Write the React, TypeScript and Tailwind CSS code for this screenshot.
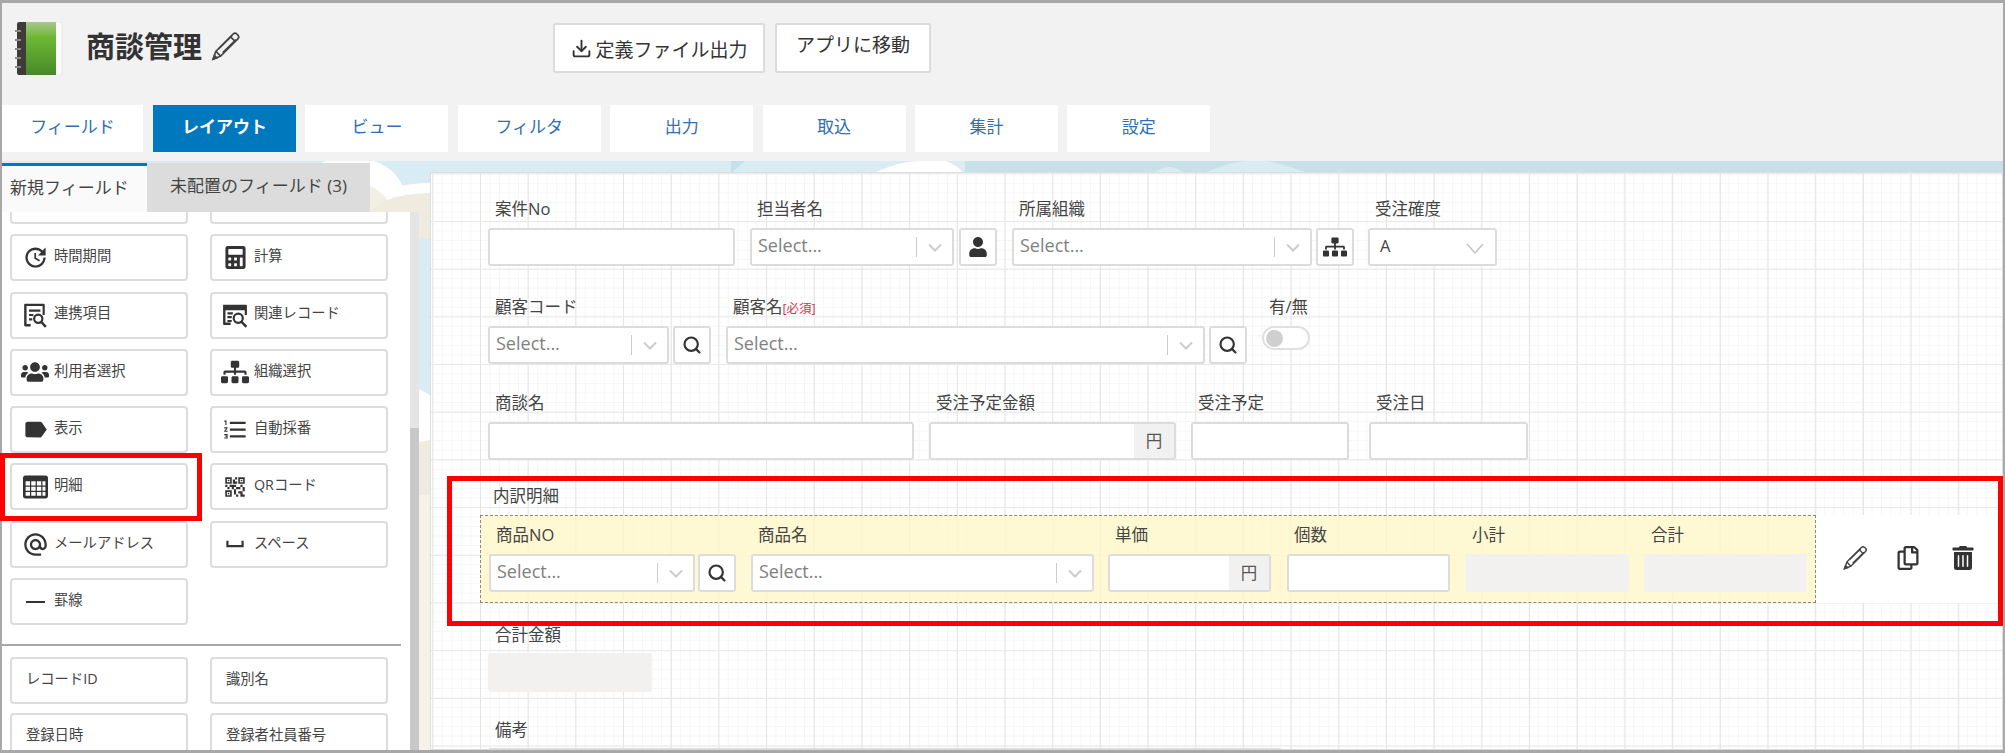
import type { ReactNode } from "react";
import { Download, Search } from "lucide-react";
import { FaCalculator, FaRegCopy, FaSitemap, FaTrashAlt, FaUser, FaUsers } from "react-icons/fa";
import {
  MdAlternateEmail,
  MdFormatListNumbered,
  MdLabel,
  MdQrCode2,
  MdSpaceBar,
  MdUpdate,
} from "react-icons/md";

const tabs = ["レイアウト", "ビュー", "フィルタ", "出力", "取込", "集計", "設定"];

const PencilIcon = ({ className }: { className: string }) => (
  <svg viewBox="0 0 24 24" fill="none" stroke="currentColor" strokeWidth="1.2" className={className}>
    <path d="M5 15.5 17.5 3a2 2 0 0 1 2.8 0l.7.7a2 2 0 0 1 0 2.8L8.5 19 3 21.2z" />
    <path d="M5 15.5 8.5 19M7.2 13.5 16.8 4M10 16.5 19.7 7M15.7 5l3.3 3.3" />
    <path d="M3 21.2l.9-2.7 1.8 1.8z" fill="currentColor" />
  </svg>
);

const RecordSearchIcon = () => (
  <svg viewBox="0 0 24 24" className="h-[26px] w-[26px] fill-[#333]">
    <path d="M1 2.5h21a1 1 0 0 1 1 1V12h-2V7.5H3.2V19H8v2.2H2a1 1 0 0 1-1-1z" />
    <path d="M5 9.5h5v2H5zM5 13h4v2H5zM5 16.5h4v2H5z" />
    <circle cx="15" cy="15" r="4.2" fill="none" stroke="#333" strokeWidth="2" />
    <path d="M18 18.2 22.5 23" stroke="#333" strokeWidth="2.2" />
  </svg>
);

const LinkedItemIcon = () => (
  <svg viewBox="0 0 24 24" className="h-[26px] w-[26px] fill-[#333]">
    <path d="M3 1.5h17a1 1 0 0 1 1 1V12h-2V3.7H4.2v16.6H8v2.2H3a1 1 0 0 1-1-1v-19a1 1 0 0 1 1-1z" />
    <path d="M6.5 7h10.5v2H6.5zM6.5 11h4v2h-4zM6.5 15h3v2h-3z" />
    <circle cx="15" cy="15.5" r="3.8" fill="none" stroke="#333" strokeWidth="2" />
    <path d="M17.8 18.4 22 23" stroke="#333" strokeWidth="2.2" />
  </svg>
);

const TableIcon = () => (
  <svg viewBox="0 0 24 22" className="h-[24px] w-[25px]">
    <rect x="0" y="0" width="24" height="22" rx="2.5" fill="#333" />
    <path
      d="M2.5 5.5h4.2v4H2.5zM7.9 5.5h4.2v4H7.9zM13.3 5.5h4.2v4h-4.2zM18.7 5.5h2.8v4h-2.8zM2.5 10.7h4.2v4H2.5zM7.9 10.7h4.2v4H7.9zM13.3 10.7h4.2v4h-4.2zM18.7 10.7h2.8v4h-2.8zM2.5 15.9h4.2v3.6H2.5zM7.9 15.9h4.2v3.6H7.9zM13.3 15.9h4.2v3.6h-4.2zM18.7 15.9h2.8v3.6h-2.8z"
      fill="#ffffff"
    />
  </svg>
);

const cards: { label: string; icon?: ReactNode }[] = [
  { label: "" },
  { label: "" },
  { label: "時間期間", icon: <MdUpdate size={27} color="#333" /> },
  { label: "計算", icon: <FaCalculator size={23} color="#333" /> },
  { label: "連携項目", icon: <LinkedItemIcon /> },
  { label: "関連レコード", icon: <RecordSearchIcon /> },
  { label: "利用者選択", icon: <FaUsers size={28} color="#333" /> },
  { label: "組織選択", icon: <FaSitemap size={28} color="#333" /> },
  { label: "表示", icon: <MdLabel size={27} color="#333" /> },
  { label: "自動採番", icon: <MdFormatListNumbered size={27} color="#333" /> },
  { label: "明細", icon: <TableIcon /> },
  { label: "QRコード", icon: <MdQrCode2 size={26} color="#333" /> },
  { label: "メールアドレス", icon: <MdAlternateEmail size={27} color="#333" /> },
  { label: "スペース", icon: <MdSpaceBar size={26} color="#333" /> },
  { label: "罫線", icon: <span className="h-[2px] w-[19px] bg-[#333]" /> },
];

const systemCards = ["レコードID", "識別名", "登録日時", "登録者社員番号"];

const Card = ({ label, icon }: { label: string; icon?: ReactNode }) => (
  <div className="flex h-[47px] items-center rounded-[4px] border-2 border-[#dcdcdc] bg-white text-[14.3px] text-[#444]">
    {icon ? (
      <span className="flex w-[42px] shrink-0 justify-center pl-[4px]">{icon}</span>
    ) : (
      <span className="w-[14px]" />
    )}
    <span className="-mt-[4px]">{label}</span>
  </div>
);

const Field = ({ label, children, className }: { label: ReactNode; children: ReactNode; className?: string }) => (
  <div className={className}>
    <div className="mb-[10px] h-[20px] whitespace-nowrap pl-[7px] text-[16.5px] leading-[22px] text-[#444]">{label}</div>
    {children}
  </div>
);

const TextBox = ({ className }: { className: string }) => (
  <div className={`h-[38px] rounded-[3px] border-2 border-[#dcdcdc] bg-white ${className}`} />
);

const Select = ({ className }: { className: string }) => (
  <div className={`flex h-[38px] items-center rounded-[3px] border-2 border-[#dcdcdc] bg-white pl-[6px] ${className}`}>
    <span className="-mt-[5px] flex-1 text-[18px] leading-[20px] text-[#808080]">Select...</span>
    <span className="h-[20px] w-px bg-[#cccccc]" />
    <svg viewBox="0 0 14 9" className="ml-[11px] mr-[10px] h-[9px] w-[14px]" fill="none" stroke="#cccccc" strokeWidth="2">
      <path d="M1 1.5 7 7.5 13 1.5" />
    </svg>
  </div>
);

const IconButton = ({ children }: { children: ReactNode }) => (
  <div className="flex h-[38px] w-[38px] items-center justify-center rounded-[3px] border-2 border-[#dcdcdc] bg-white">
    {children}
  </div>
);

const SearchButton = () => (
  <IconButton>
    <Search size={20} strokeWidth={2.6} color="#333" />
  </IconButton>
);

const Yen = ({ className }: { className: string }) => (
  <div className={`flex h-[38px] justify-end overflow-hidden rounded-[3px] border-2 border-[#dcdcdc] bg-white ${className}`}>
    <span className="flex w-[40px] items-center justify-center bg-[#f2f1f1] text-[16.5px] text-[#555]">円</span>
  </div>
);

const Sky = () => (
  <svg viewBox="2 161 2001 589" className="absolute inset-0 h-full w-full">
    <rect x="2" y="161" width="2001" height="589" fill="#d9ecf3" />
    <rect x="965" y="161" width="1038" height="30" fill="#c8e0e9" />
    <path d="M731 161h14l-14 12h-0z" fill="#c8e0e9" />
    <path d="M1152 175q17-16 34 0zM1200 175q30-14 50-14h16q22 4 46 14z" fill="#d9ecf3" />
    <path d="M870 175q28-14 50-14h25q12 3 20 14z" fill="#ffffff" />
    <ellipse cx="350" cy="195" rx="54" ry="38" fill="#ffffff" />
    <ellipse cx="430" cy="200" rx="50" ry="17" fill="#ffffff" />
    <ellipse cx="335" cy="216" rx="58" ry="38" fill="#f2efe3" />
    <ellipse cx="430" cy="216" rx="60" ry="23" fill="#efecdf" />
    <path d="M419 389 430 395V445L419 442z" fill="#ffffff" />
    <path d="M419 442 430 440V750H419z" fill="#efecdf" />
    <rect x="419" y="495" width="11" height="255" fill="#f5f2ea" />
  </svg>
);

export default function App() {
  return (
    <div className="relative h-[753px] w-[2005px] overflow-hidden font-['Open_Sans','Noto_Sans_CJK_JP',sans-serif]">
      <div className="h-full border-x-2 border-y-[3px] border-[#a8a8a8] bg-[#f2f2f2]">
        {/* header */}
        <div className="flex h-[102px] items-start">
          <svg viewBox="0 0 48 53" className="ml-[13px] mt-[19px] h-[53px] w-[48px]">
            <defs>
              <linearGradient id="cover" x1="0" y1="0" x2="0" y2="1">
                <stop offset="0" stopColor="#a9c78c" />
                <stop offset="0.3" stopColor="#6cb832" />
                <stop offset="1" stopColor="#47892a" />
              </linearGradient>
            </defs>
            <rect x="38" y="0" width="9" height="53" rx="2" fill="#fbfbfb" stroke="#dddddd" strokeWidth="0.6" />
            <rect x="2" y="0" width="12" height="53" rx="2" fill="#3f3b39" />
            <rect x="11" y="0" width="30" height="53" fill="url(#cover)" />
            <path d="M0 9h6M0 18h6M0 27h6M0 36h6M0 45h6" stroke="#8a8a8a" strokeWidth="2" />
          </svg>
          <div className="ml-[23px] mt-[25px] text-[29px] font-bold leading-[38px] text-[#333]">商談管理</div>
          <PencilIcon className="ml-[7px] mt-[27px] h-[33px] w-[33px] text-[#444]" />
          <div className="ml-[311px] mt-[20px] flex gap-[10px] text-[19px] text-[#333]">
            <div className="flex h-[50px] w-[212px] items-center justify-center gap-[4px] rounded-[2px] border-2 border-[#dcdcdc] bg-white">
              <Download size={21} strokeWidth={2.2} />
              <span className="mt-[4px]">定義ファイル出力</span>
            </div>
            <div className="flex h-[50px] w-[156px] items-center justify-center rounded-[2px] border-2 border-[#dcdcdc] bg-white">
              <span className="-mt-[5px]">アプリに移動</span>
            </div>
          </div>
        </div>

        {/* tabs */}
        <div className="flex h-[47px] text-[17px] text-[#2f6fb3]">
          <div className="mr-[10px] flex w-[141px] items-center justify-center bg-white pb-[3px]">フィールド</div>
          <div className="flex gap-[9.4px]">
            {tabs.map((tab, i) => (
              <div
                key={tab}
                className={
                  i === 0
                    ? "flex w-[143px] items-center justify-center bg-[#0078be] pb-[3px] font-bold text-white"
                    : "flex w-[143px] items-center justify-center bg-white pb-[3px]"
                }
              >
                {tab}
              </div>
            ))}
          </div>
        </div>

        {/* main */}
        <div className="relative mt-[9px] flex h-[589px]">
          <Sky />

          <div className="relative w-[417px] shrink-0 pt-[2px]">
            <div className="flex h-[49px] w-[368px] text-[17px] text-[#444]">
              <div className="flex w-[145px] items-center border-t-[3px] border-[#0078be] bg-[#fafafa] pb-[3px] pl-[8px]">
                新規フィールド
              </div>
              <div className="flex flex-1 items-center justify-center bg-[#dcdcdc] pb-[3px]">未配置のフィールド (3)</div>
            </div>
            <div className="flex h-[538px]">
              <div className="w-[408px] overflow-hidden bg-white">
                <div className="-mt-[35px] grid grid-cols-[178px_178px] gap-x-[22px] gap-y-[10.3px] px-[8px]">
                  {cards.map((card, i) => (
                    <Card key={i} label={card.label} icon={card.icon} />
                  ))}
                </div>
                <div className="mb-[11px] mt-[19px] h-[2px] w-[399px] bg-[#a8a8a8]" />
                <div className="grid grid-cols-[178px_178px] gap-x-[22px] gap-y-[9px] px-[8px]">
                  {systemCards.map((label) => (
                    <Card key={label} label={label} />
                  ))}
                </div>
              </div>
              <div className="flex w-[9px] flex-col">
                <div className="h-[216px] bg-[#e5e5e5]" />
                <div className="flex-1 bg-[#c8c8c8]" />
              </div>
            </div>
          </div>

          <div className="relative ml-[11px] mt-[11px] flex-1 overflow-hidden border border-[#dddddd] bg-white bg-[linear-gradient(#e8e8e8_1px,transparent_1px),linear-gradient(90deg,#e4e4e4_1px,transparent_1px),linear-gradient(#f6f6f6_1px,transparent_1px),linear-gradient(90deg,#f6f6f6_1px,transparent_1px)] bg-[size:47.7px_47.7px,47.7px_47.7px,9.54px_9.54px,9.54px_9.54px] bg-[position:1.3px_0.3px] pl-[57px] pt-[25px]">
            <div className="flex">
              <Field label="案件No" className="mr-[15px]">
                <TextBox className="w-[247px]" />
              </Field>
              <Field label="担当者名" className="mr-[5px]">
                <Select className="w-[204px]" />
              </Field>
              <div className="mr-[15px] pt-[30px]">
                <IconButton>
                  <FaUser size={20} color="#333" />
                </IconButton>
              </div>
              <Field label="所属組織" className="mr-[4px]">
                <Select className="w-[300px]" />
              </Field>
              <div className="mr-[14px] pt-[30px]">
                <IconButton>
                  <FaSitemap size={24} color="#333" />
                </IconButton>
              </div>
              <Field label="受注確度">
                <div className="flex h-[38px] w-[129px] items-center justify-between rounded-[3px] border-2 border-[#dcdcdc] bg-white pl-[10px] pr-[11px] text-[16.5px] text-[#444]">
                  <span className="-mt-[2px]">A</span>
                  <svg viewBox="0 0 18 11" className="mt-[3px] h-[11px] w-[18px]" fill="none" stroke="#c4c4c4" strokeWidth="1.5">
                    <path d="M1 1 9 10 17 1" />
                  </svg>
                </div>
              </Field>
            </div>

            <div className="mt-[30px] flex">
              <Field label="顧客コード" className="mr-[4px]">
                <Select className="w-[181px]" />
              </Field>
              <div className="mr-[15px] pt-[30px]">
                <SearchButton />
              </div>
              <Field
                label={
                  <>
                    顧客名<span className="text-[12.5px] text-[#c7384f]">[必須]</span>
                  </>
                }
                className="mr-[4px]"
              >
                <Select className="w-[479px]" />
              </Field>
              <div className="mr-[15px] pt-[30px]">
                <SearchButton />
              </div>
              <Field label="有/無">
                <div className="mt-[6px] flex h-[24px] w-[48px] items-center rounded-full border-2 border-[#e0e0e0] bg-white pl-[2px]">
                  <span className="h-[17px] w-[17px] rounded-full bg-[#cfcfcf]" />
                </div>
              </Field>
            </div>

            <div className="mt-[28px] flex">
              <Field label="商談名" className="mr-[15px]">
                <TextBox className="w-[426px]" />
              </Field>
              <Field label="受注予定金額" className="mr-[15px]">
                <Yen className="w-[247px]" />
              </Field>
              <Field label="受注予定" className="mr-[20px]">
                <TextBox className="w-[158px]" />
              </Field>
              <Field label="受注日">
                <TextBox className="w-[159px]" />
              </Field>
            </div>

            {/* 内訳明細 */}
            <div className="mt-[25px]">
              <div className="mb-[10px] h-[20px] pl-[5px] text-[16.5px] leading-[22px] text-[#444]">内訳明細</div>
              <div className="-ml-[8px] flex items-stretch">
                <div className="flex h-[88px] w-[1336px] border border-dashed border-[#888888] bg-[#fff7c8]/80 pl-[8px] pt-[8px]">
                  <Field label="商品NO" className="mr-[3px]">
                    <Select className="w-[206px]" />
                  </Field>
                  <div className="mr-[15px] pt-[30px]">
                    <SearchButton />
                  </div>
                  <Field label="商品名" className="mr-[14px]">
                    <Select className="w-[343px]" />
                  </Field>
                  <Field label="単価" className="mr-[16px]">
                    <Yen className="w-[163px]" />
                  </Field>
                  <Field label="個数" className="mr-[15px]">
                    <TextBox className="w-[163px]" />
                  </Field>
                  <Field label="小計" className="mr-[15px]">
                    <div className="h-[38px] w-[164px] rounded-[3px] bg-[#f2f1f0]" />
                  </Field>
                  <Field label="合計">
                    <div className="h-[38px] w-[163px] rounded-[3px] bg-[#f2f1f0]" />
                  </Field>
                </div>
                <div className="flex w-[184px] items-center gap-[27px] bg-white pb-[2px] pl-[25px] text-[#333]">
                  <PencilIcon className="h-[28px] w-[28px] text-[#444]" />
                  <FaRegCopy size={24} />
                  <FaTrashAlt size={24} className="ml-[4px]" />
                </div>
              </div>
            </div>

            <div className="mt-[21px]">
              <Field label="合計金額">
                <div className="-mt-px h-[39px] w-[164px] rounded-[3px] bg-[#f2f1f0]" />
              </Field>
            </div>
            <div className="mt-[27px]">
              <Field label="備考">
                <TextBox className="-mt-px w-[794px]" />
              </Field>
            </div>
          </div>
        </div>
      </div>

      {/* annotations */}
      <div className="absolute left-0 top-[453px] h-[68px] w-[202px] border-[5px] border-[#ff0000]" />
      <div className="absolute left-[447px] top-[476px] h-[150px] w-[1556px] border-[5px] border-[#ff0000]" />
    </div>
  );
}
